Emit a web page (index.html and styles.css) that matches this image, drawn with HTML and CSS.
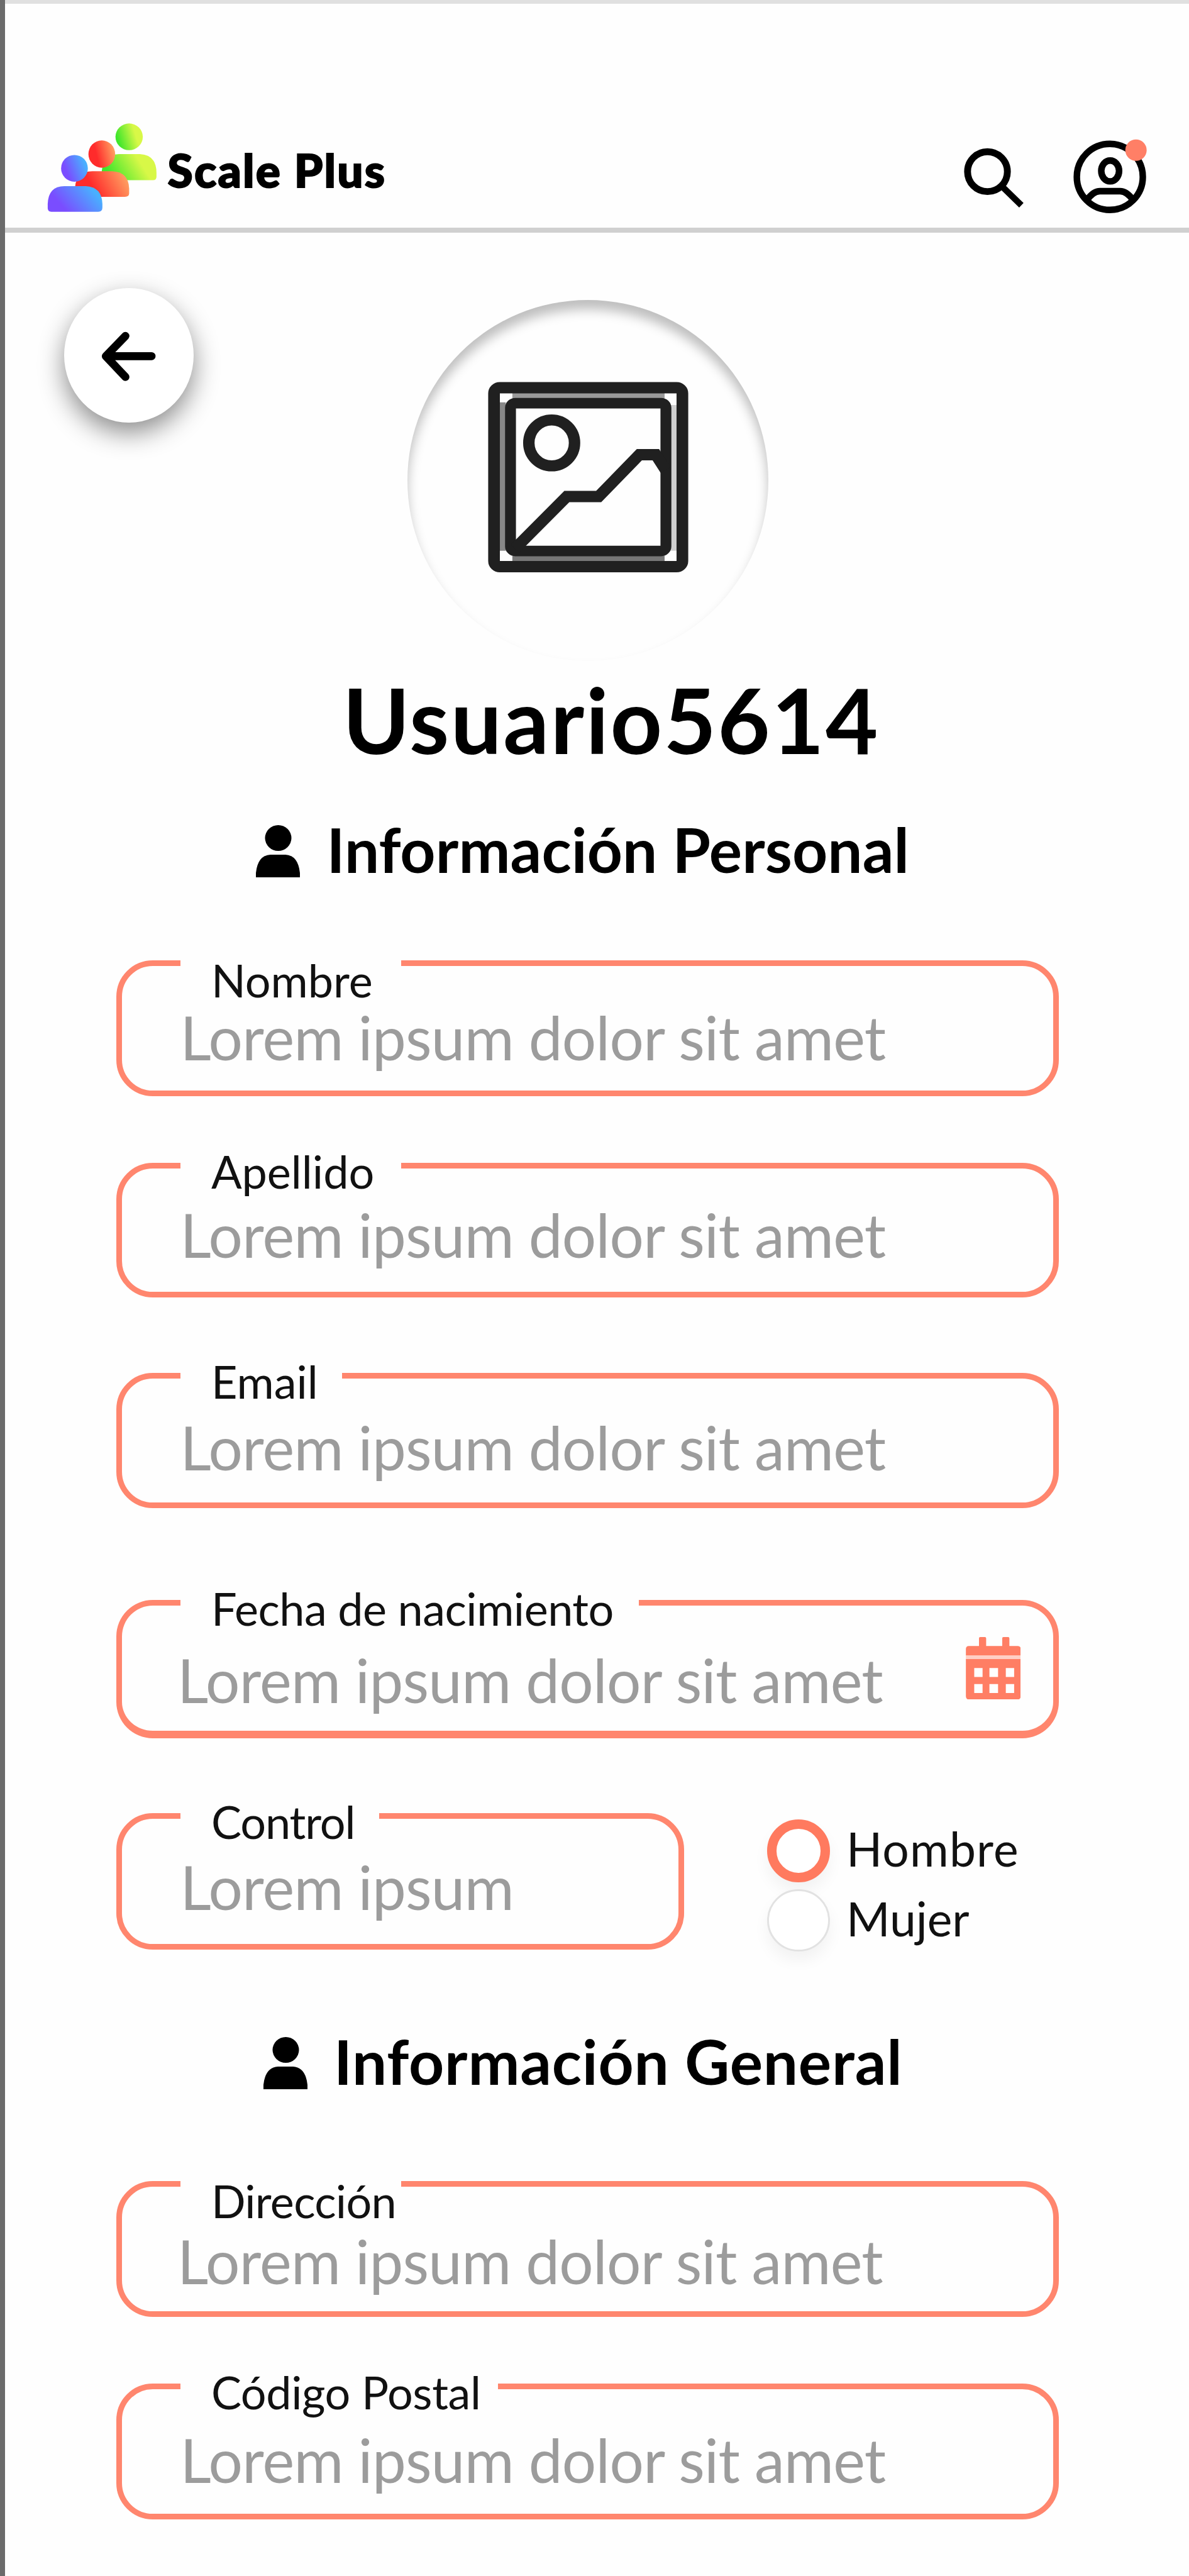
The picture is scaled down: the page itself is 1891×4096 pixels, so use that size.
FILE: index.html
```html
<!DOCTYPE html>
<html lang="es">
<head>
<meta charset="utf-8">
<title>Scale Plus</title>
<link rel="stylesheet" href="styles.css">
</head>
<body>
<header class="header">
  <svg class="logo" viewBox="80 200 190 160" aria-hidden="true">
    <defs>
      <linearGradient id="green" x1="0" y1="0.7" x2="1" y2="0.4"><stop offset="0.1" stop-color="#3fe62b"/><stop offset="0.75" stop-color="#d8f847"/></linearGradient>
      <linearGradient id="red" x1="0" y1="0.6" x2="1" y2="0.35"><stop offset="0.3" stop-color="#ff2b2b"/><stop offset="1" stop-color="#ffa463"/></linearGradient>
      <linearGradient id="blue" x1="0" y1="0.7" x2="1" y2="0.3"><stop offset="0.2" stop-color="#7a4dff"/><stop offset="0.9" stop-color="#49b0ff"/></linearGradient>
    </defs>
    <ellipse cx="219" cy="227" rx="23" ry="22.5" fill="url(#green)"/>
    <path d="M173 300V284Q176 256 202 256H237Q265 257 265 288V294Q265 300 259 300Z" fill="url(#green)"/>
    <ellipse cx="173" cy="256" rx="22.5" ry="23" fill="url(#red)"/>
    <path d="M128 328V312Q130 285 157 285H190Q218 286 219 314V322Q219 328 212 328Z" fill="url(#red)"/>
    <ellipse cx="127" cy="280" rx="22.5" ry="22.5" fill="url(#blue)"/>
    <path d="M82 347V340Q83 310 110 310H146Q173 311 174 340V346Q174 353 167 353H88Q82 353 82 347Z" fill="url(#blue)"/>
  </svg>
  <span class="brand">Scale Plus</span>
  <svg class="search" viewBox="1615 240 110 110" fill="none" stroke="#000" stroke-width="11.5"><circle cx="1661" cy="287.500" r="33.500"/><path d="M1683 310L1718 344" stroke-width="10.5"/></svg>
  <svg class="profile" viewBox="1800 228 136 134" fill="none" stroke="#000" stroke-width="11">
    <circle cx="1866.700" cy="296" r="55.500"/>
    <ellipse cx="1867.300" cy="286" rx="15" ry="17.500"/>
    <path d="M1828 335Q1839 320 1850 320H1884Q1895 320 1906 335"/>
    <circle cx="1910.700" cy="251" r="18" fill="#ff7f66" stroke="none"/>
  </svg>
</header>

<main class="page">
  <div class="hero">
    <button class="back" aria-label="Volver"><svg viewBox="166 550 104 96" fill="none" stroke="#000" stroke-width="13.5" stroke-linecap="round" stroke-linejoin="round"><path d="M256 599H180M212 565L179 599L212 634"/></svg></button>
    <div class="avatar">
      <svg viewBox="403 420 755 740" preserveAspectRatio="none" fill="none" stroke="#202020">
        <path d="M457 500V1075" stroke="#888" stroke-width="26"/>
        <path d="M495 475H1068" stroke="#999" stroke-width="24"/>
        <path d="M1103 510V1075" stroke="#d0d0d0" stroke-width="24"/>
        <path d="M495 1107H1068" stroke="#777" stroke-width="26"/>
        <rect x="426" y="443" width="709" height="694" rx="22" stroke-width="44"/>
        <rect x="488" y="503" width="585" height="573" rx="18" stroke-width="41"/>
        <ellipse cx="643" cy="657" rx="86" ry="89" stroke-width="43"/>
        <path d="M505 1067L700 865H820L973 703H1035L1072 762" stroke-width="44"/>
      </svg>
    </div>
  </div>

  <h1 class="username">Usuario5614</h1>

  <h2 class="section personal">
    <svg viewBox="0 0 70 83" aria-hidden="true"><ellipse cx="35.500" cy="20.500" rx="21" ry="20.500"/><path d="M0 83V76Q3 48 23 47H47Q67 48 70 76V83Z"/></svg>
    <span>Información Personal</span>
  </h2>

  <div class="field nombre"><label>Nombre</label><span class="value">Lorem ipsum dolor sit amet</span></div>
  <div class="field apellido"><label>Apellido</label><span class="value">Lorem ipsum dolor sit amet</span></div>
  <div class="field email"><label>Email</label><span class="value">Lorem ipsum dolor sit amet</span></div>
  <div class="field fecha">
    <label>Fecha de nacimiento</label>
    <div class="with-icon">
      <span class="value">Lorem ipsum dolor sit amet</span>
      <svg class="calendar" viewBox="0 0 92 105" fill="#ff7e64"><path d="M0 31V20Q0 15 5 15H22V2Q22 0 24 0H32Q34 0 34 2V15H61V2Q61 0 63 0H71Q73 0 73 2V15H87Q92 15 92 20V31Z"/><path d="M0 31H92V38H0Z" fill="#ffcfc5"/><path fill-rule="evenodd" d="M0 37H92V99Q92 105 86 105H6Q0 105 0 99ZM14 52V67H28V52ZM39.500 52V67H54V52ZM67 52V67H81V52ZM14 79V94H28V79ZM39.500 79V94H54V79ZM67 79V94H81V79Z"/></svg>
    </div>
  </div>
  <div class="row">
    <div class="field control"><label>Control</label><span class="value">Lorem ipsum</span></div>
    <div class="radios">
      <div class="radio hombre"><i class="ring selected"></i><span>Hombre</span></div>
      <div class="radio mujer"><i class="ring"></i><span>Mujer</span></div>
    </div>
  </div>

  <h2 class="section general">
    <svg viewBox="0 0 70 83" aria-hidden="true"><ellipse cx="35.500" cy="20.500" rx="21" ry="20.500"/><path d="M0 83V76Q3 48 23 47H47Q67 48 70 76V83Z"/></svg>
    <span>Información General</span>
  </h2>

  <div class="field direccion"><label>Dirección</label><span class="value">Lorem ipsum dolor sit amet</span></div>
  <div class="field postal"><label>Código Postal</label><span class="value">Lorem ipsum dolor sit amet</span></div>
</main>
</body>
</html>
```
FILE: styles.css
```css
* { box-sizing: border-box; }

body {
  margin: 0;
  height: 4096px;
  overflow: hidden;
  border-left: 8px solid #6b6b6b;
  background: #fefefe;
  color: #000;
  font-family: "Lato", "Liberation Sans", sans-serif;
}

svg { display: block; flex: none; }

/* Header */
.header {
  display: flex;
  align-items: flex-start;
  height: 370px;
  padding: 0 60px 0 66px;
  border-top: 6px solid #e0e0e0;
  border-bottom: 8px solid #d0d0d0;
}
.logo { width: 179.6px; height: 151.3px; margin-top: 186px; }
.brand {
  margin: 220px 0 0 13px;
  font-size: 73px;
  font-weight: 900;
  line-height: 88px;
  letter-spacing: 2.2px;
  white-space: nowrap;
  -webkit-text-stroke: 2px #000;
}
.search { width: 104px; height: 104px; margin: 222px 0 0 auto; }
.profile { width: 128.6px; height: 126.7px; margin: 210.6px 0 0 71px; }

/* Back button and avatar */
.hero { display: flex; align-items: flex-start; height: 680px; padding-left: 94.4px; }
.back {
  display: flex;
  align-items: center;
  justify-content: center;
  width: 205.5px;
  height: 214px;
  margin-top: 88px;
  padding: 0;
  border: 0;
  border-radius: 50%;
  background: #fff;
  box-shadow: 0 16px 40px rgba(0, 0, 0, .45);
}
.back svg { width: 98.3px; height: 90.8px; }
.avatar {
  display: flex;
  align-items: flex-start;
  justify-content: center;
  width: 573.5px;
  height: 573.5px;
  margin: 107px 0 0 340.6px;
  padding-top: 130px;
  border-radius: 50%;
  box-shadow: inset 0 15px 18px rgba(0, 0, 0, .25);
}
.avatar svg { width: 319px; height: 303.5px; }

/* Headings */
.username {
  margin: 14px 0 0;
  padding-left: 537px;
  font-size: 144px;
  font-weight: 700;
  line-height: 160px;
  letter-spacing: 2.3px;
}
.section {
  display: flex;
  align-items: flex-start;
  gap: 42.5px;
  height: 120px;
  margin: 0;
  font-size: 98px;
  font-weight: 700;
  line-height: 120px;
  white-space: nowrap;
}
.section svg { width: 70px; height: 83px; margin-top: 22px; }
.personal { margin-top: 66px; padding-left: 399px; letter-spacing: .1px; }
.general { margin-top: 117px; padding-left: 410.500px; letter-spacing: .8px; }

/* Outlined fields; the label's background opens a gap in the top border */
.field {
  display: flex;
  flex-direction: column;
  align-items: flex-start;
  width: 1499px;
  height: 216px;
  margin-left: 177px;
  border: 9px solid #ff866e;
  border-radius: 58px;
}
.field label {
  margin: -9px 0 0 93.4px;
  padding-left: 48.5px;
  background: #fefefe;
  font-size: 72px;
  line-height: 26px;
  white-space: nowrap;
  color: #111;
}
.value {
  margin-left: 92.5px;
  font-size: 96px;
  line-height: 96px;
  letter-spacing: -.72px;
  white-space: nowrap;
  color: #9c9c9c;
}

.nombre { margin-top: 117px; }
.nombre label, .direccion label { width: 350.6px; padding-top: 18px; }
.nombre .value { margin-top: 29.5px; }

.apellido { height: 214px; margin-top: 105.5px; }
.apellido label { width: 350.6px; }
.apellido .value { margin-top: 40.5px; }

.email { height: 215px; margin-top: 120.500px; }
.email label { width: 257px; }
.email .value { margin-top: 43.5px; }

.fecha { height: 220px; margin-top: 145.5px; border-bottom-width: 12px; }
.fecha label { width: 728.6px; letter-spacing: -.5px; }
.with-icon { display: flex; width: 100%; padding-right: 52px; }
.with-icon .value { margin-top: 53px; margin-left: 88px; }
.calendar { width: 87.500px; height: 99.500px; margin: 33px 0 0 auto; }

.row { display: flex; align-items: flex-start; height: 217px; margin-top: 119.5px; }
.control { width: 903px; height: 217px; }
.control label { width: 315.6px; letter-spacing: -1.1px; }
.control .value { margin-top: 43px; }

.radios { display: flex; flex-direction: column; gap: 11px; margin: 10px 0 0 132px; }
.radio { display: flex; gap: 26.5px; height: 99.5px; }
.radio span { padding-bottom: 10px; font-size: 75px; line-height: 92px; color: #111; }
.hombre span { letter-spacing: 1.2px; }
.mujer span { letter-spacing: 0; }
.ring {
  width: 99.5px;
  height: 99.5px;
  border: 3px solid #e2e2e2;
  border-radius: 50%;
  background: #fff;
  box-shadow: 0 14px 24px rgba(0, 0, 0, .05);
}
.ring.selected { border: 15px solid #ff7a5f; }

.direccion { margin-top: 131px; }
.direccion label { letter-spacing: -.7px; }
.direccion .value { margin-top: 35px; margin-left: 88px; }

.postal { margin-top: 105.5px; }
.postal label { width: 505px; letter-spacing: -.4px; }
.postal .value { margin-top: 47.5px; }
```
